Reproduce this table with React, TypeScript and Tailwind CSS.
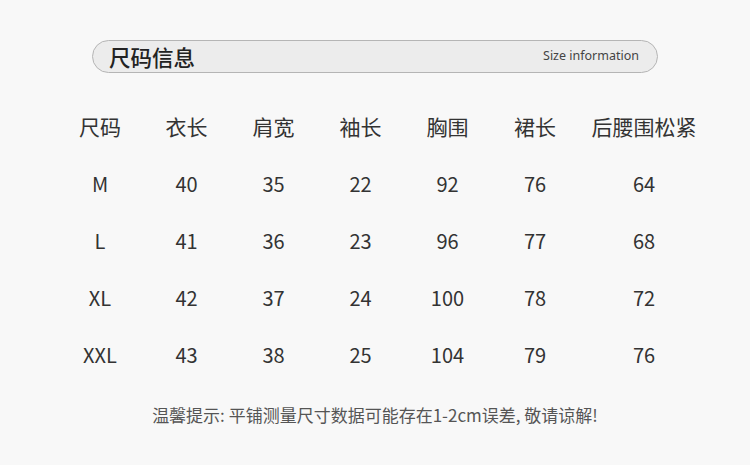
import React from 'react'

const headers = ['尺码', '衣长', '肩宽', '袖长', '胸围', '裙长', '后腰围松紧']

const rows = [
    ['M', '40', '35', '22', '92', '76', '64'],
    ['L', '41', '36', '23', '96', '77', '68'],
    ['XL', '42', '37', '24', '100', '78', '72'],
    ['XXL', '43', '38', '25', '104', '79', '76'],
]

const cjk = { fontFamily: '"Noto Sans CJK SC", "Noto Sans", sans-serif' }

export default function App() {
    return (
        <div className="w-[750px] h-[465px] bg-[#f8f8f8] text-[#333] overflow-hidden" style={cjk}>
            <div className="pt-[40px] pl-[92px]">
                <div className="w-[566px] h-[33px] rounded-full border border-[#b5b5b5] bg-[#ececec] flex items-center justify-between pl-[16px] pr-[18px]">
                    <span className="text-[21.5px] font-medium text-[#222] leading-none">尺码信息</span>
                    <span className="text-[12.5px] text-[#444] leading-none" style={{ fontFamily: '"Noto Sans", sans-serif' }}>Size information</span>
                </div>
            </div>
            <div className="mt-[25px] ml-[57px] grid grid-cols-[86px_87px_87px_87px_87px_88px_130px]">
                {headers.map(h =>
                    <div key={h} className="h-[57px] flex items-center justify-center text-[21px]">{h}</div>)}
                {rows.map((r, i) =>
                    r.map((c, j) =>
                        <div key={i + '-' + j} className="h-[57px] flex items-center justify-center text-[20px]">{c}</div>))}
            </div>
            <p className="mt-[19px] text-center text-[17px] text-[#555]">温馨提示: 平铺测量尺寸数据可能存在1-2cm误差, 敬请谅解!</p>
        </div>
    )
}
